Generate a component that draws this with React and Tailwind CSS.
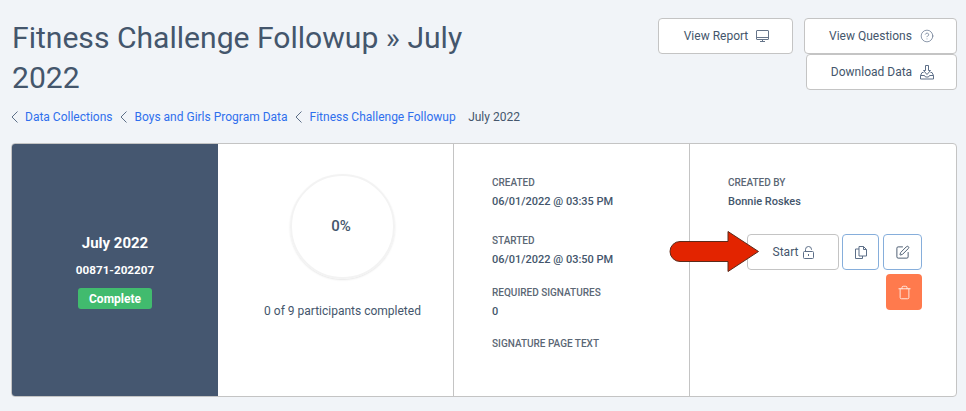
import React from 'react';
import { CircleHelp, SquarePen, Trash } from 'lucide-react';

function MonitorIcon() {
  return (
    <svg width="13" height="13" viewBox="0 0 13 13" fill="none" stroke="#66758a" strokeWidth="1">
      <rect x=".5" y=".5" width="12" height="9" rx=".5" />
      <path d="M.5 7.500h12" />
      <path d="M6.500 9.500v2M4 11.500h5" />
    </svg>
  );
}

function DownloadTray() {
  return (
    <svg width="14" height="15" viewBox="0 0 14 15" fill="none" stroke="#5d6f88" strokeWidth="1">
      <path d="M5.500 .5h3v5h2L7 9.500 3.500 5.500h2z" />
      <path d="M3.500 7.500H2l-1.500 3v3.500h13v-3.500l-1.500-3h-1.500" />
      <path d="M.5 10.500h4l1 1.500h3l1-1.500h4" />
    </svg>
  );
}

function OpenLock() {
  return (
    <svg width="11" height="13" viewBox="0 0 11 13" fill="none" stroke="#5d6f88" strokeWidth="1">
      <rect x=".5" y="5.500" width="10" height="7" rx="1" />
      <path d="M2.500 5.500V3.500a3 3 0 0 1 6 0V4" />
      <path d="M5.500 8v2" />
    </svg>
  );
}

function CopyFiles() {
  return (
    <svg width="12" height="13" viewBox="0 0 12 13" fill="none" stroke="currentColor" strokeWidth="1">
      <path d="M4 3H.5v9.500h7V10" />
      <path d="M4 .5h4.500l3 3V10H4z" />
      <path d="M8.500 .5v3h3" />
    </svg>
  );
}

function Chevron() {
  return (
    <svg width="7" height="12" viewBox="0 0 7 12" fill="none" stroke="currentColor" strokeWidth="1" className="text-[#5d6f88]">
      <path d="M6.500 .5 1 6l5.500 5.500" />
    </svg>
  );
}

function HeaderButton({ label, className, children }) {
  return (
    <button className={`h-[36px] flex items-center justify-center gap-[8px] pl-[2px] bg-white border border-[#c4c4c4] rounded-[4px] text-[12px] text-[#44566c] ${className}`}>
      <span>{label}</span>
      {children}
    </button>
  );
}

function Crumb({ label }) {
  return (
    <>
      <Chevron />
      <a className="text-[#2f6fed]">{label}</a>
    </>
  );
}

function Field({ label, value, className }) {
  return (
    <div className={className}>
      <p className="text-[10px] leading-[14px] font-medium text-[#5b6775] uppercase">{label}</p>
      {value && <p className="text-[11px] leading-[16px] mt-[4px] font-medium text-[#44566c]">{value}</p>}
    </div>
  );
}

export default function App() {
  return (
    <div className="w-[966px] h-[411px] overflow-hidden bg-[#f1f4f8] font-['Roboto',sans-serif]">
      <div className="flex justify-between pl-[12px] pr-[9px] pt-[18px] h-[143px]">
        <div>
          <h1 className="w-[480px] text-[30.1px] leading-[40px] text-[#44566c]">Fitness Challenge Followup » July 2022</h1>
          <div className="flex items-center gap-[7.5px] mt-[11px] ml-[-1.5px] text-[12px] leading-[16px]">
            <Crumb label="Data Collections" />
            <Crumb label="Boys and Girls Program Data" />
            <Crumb label="Fitness Challenge Followup" />
            <span className="ml-[5px] text-[#44566c]">July 2022</span>
          </div>
        </div>
        <div className="w-[299px] flex flex-wrap justify-end content-start">
          <HeaderButton label="View Report" className="w-[135px] mr-[11px]">
            <MonitorIcon />
          </HeaderButton>
          <HeaderButton label="View Questions" className="w-[153px]">
            <CircleHelp size={14} strokeWidth={1.2} className="text-[#5d6f88]" />
          </HeaderButton>
          <HeaderButton label="Download Data" className="w-[151px]">
            <DownloadTray />
          </HeaderButton>
        </div>
      </div>

      <div className="mx-[11px] w-[946px] h-[254px] flex bg-white border border-[#c4c4c4] rounded-[4px] overflow-hidden">
        <div className="w-[206px] bg-[#455770] flex flex-col items-center justify-center pt-[2px] text-white">
          <p className="text-[15px] leading-[20px] font-bold">July 2022</p>
          <p className="text-[11.7px] leading-[16px] font-bold mt-[9px]">00871-202207</p>
          <span className="mt-[10px] px-[11px] h-[21px] flex items-center bg-[#41bb6e] rounded-[3px] text-[12px] font-bold">Complete</span>
        </div>

        <div className="w-[236px] flex flex-col items-center border-r border-[#c4c4c4] pl-[14px] pt-[30px]">
          <div className="w-[105px] h-[105px] rounded-full border-[2px] border-[#f3f3f3] shadow-[0_1px_2px_rgba(0,0,0,0.1)] flex items-center justify-center pr-[3px] text-[15px] font-medium text-[#44566c]">0%</div>
          <p className="mt-[24px] text-[12px] leading-[16px] text-[#44566c]">0 of 9 participants completed</p>
        </div>

        <div className="w-[236px] border-r border-[#c4c4c4] pl-[38px] pt-[32px]">
          <Field label="Created" value="06/01/2022 @ 03:35 PM" />
          <Field label="Started" value="06/01/2022 @ 03:50 PM" className="mt-[24px]" />
          <Field label="Required Signatures" value="0" className="mt-[18px]" />
          <Field label="Signature Page Text" className="mt-[17px]" />
        </div>

        <div className="relative flex-1 pl-[38px] pt-[32px]">
          <Field label="Created By" value="Bonnie Roskes" />
          <div className="flex flex-wrap w-[200px] ml-[19px] mt-[24px]">
            <button className="w-[92px] h-[36px] flex items-center justify-center gap-[5px] pl-[1px] border border-[#c4c4c4] rounded-[4px] text-[12px] text-[#44566c]">
              Start <OpenLock />
            </button>
            <button className="ml-[3px] w-[37px] h-[36px] flex items-center justify-center border border-[#86aedb] rounded-[4px] text-[#5d6f88]">
              <CopyFiles />
            </button>
            <button className="ml-[4px] w-[39px] h-[36px] flex items-center justify-center border border-[#86aedb] rounded-[4px] text-[#44566c]">
              <SquarePen size={15} strokeWidth={1.5} />
            </button>
            <button className="ml-[139px] mt-[4px] w-[36px] h-[36px] flex items-center justify-center bg-[#ff7a4d] rounded-[4px] text-[#fff3ee]">
              <Trash size={15} strokeWidth={1.4} />
            </button>
          </div>
          <svg className="absolute left-[-21px] top-[86px]" width="91" height="43" viewBox="0 0 91 43">
            <path d="M11 11.500H59V1.500L89.500 21.500 59 41.500V31.500H11A10 10 0 0 1 11 11.500Z" fill="#e32400" stroke="#5c2a1a" strokeWidth="1" />
          </svg>
        </div>
      </div>
    </div>
  );
}
